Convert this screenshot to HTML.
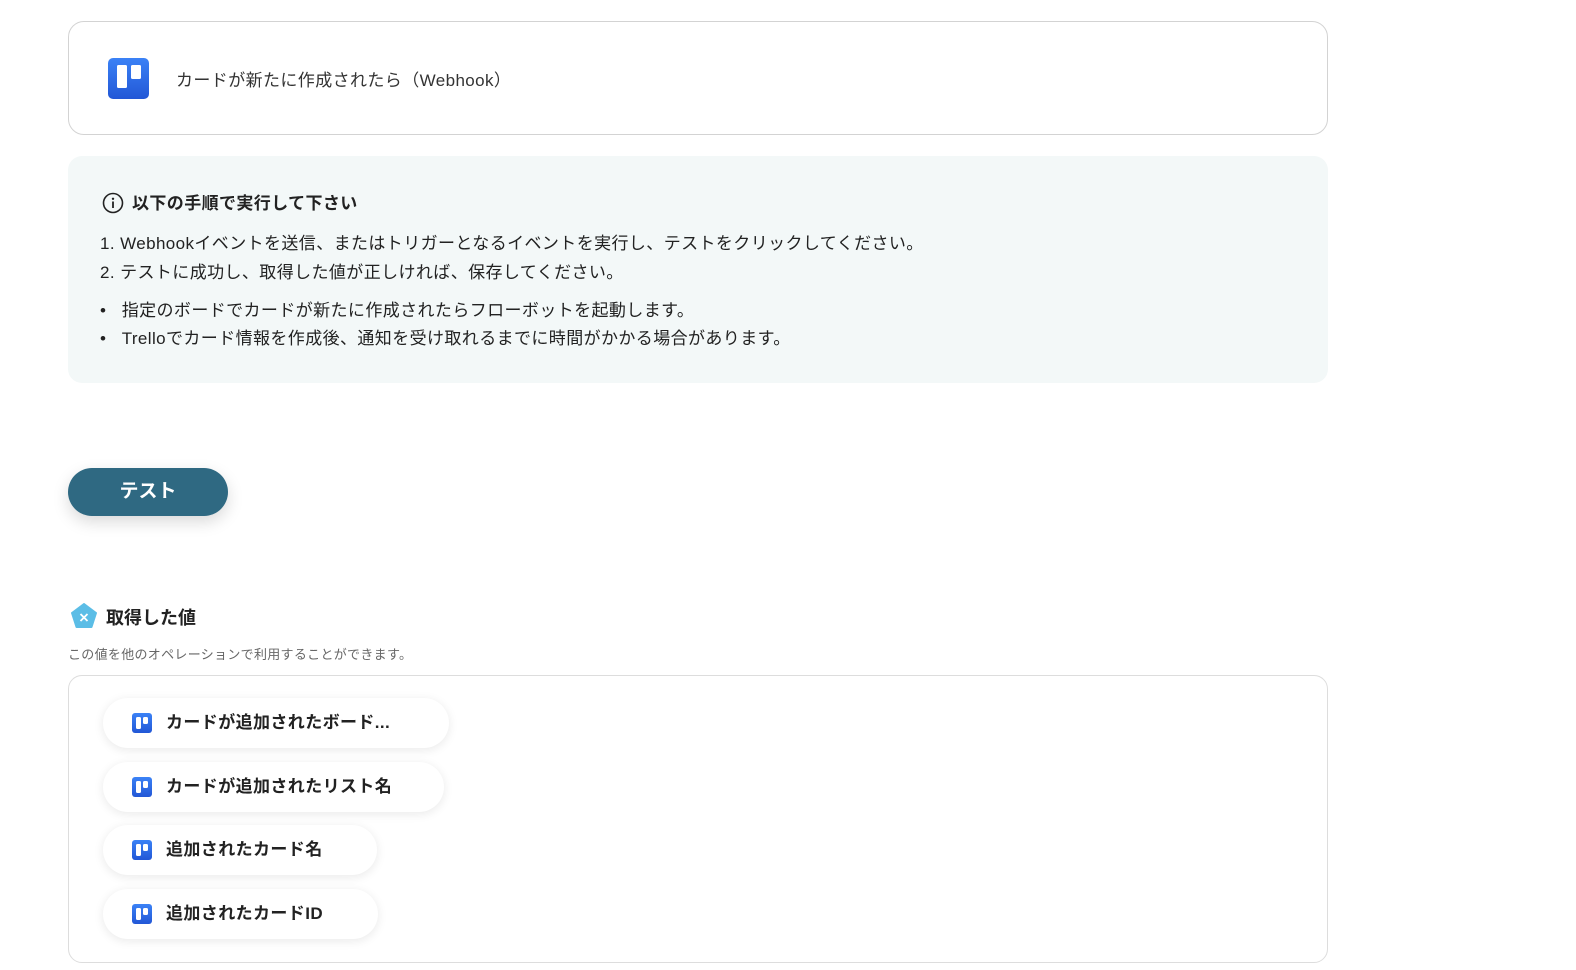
<!DOCTYPE html>
<html><head><meta charset="utf-8"><style>
html,body{margin:0;padding:0}
body{background:#fff;font-family:"Liberation Sans","Noto Sans CJK JP",sans-serif;color:#222;width:1576px;height:970px;overflow:hidden;position:relative}
.abs{position:absolute}
.card{left:68px;top:21px;width:1260px;height:114px;border:1px solid #d3d3d3;border-radius:16px;box-sizing:border-box}
.logo{background:linear-gradient(#3b82f6,#2257d6);border-radius:4px;position:absolute}
.logo:before,.logo:after{content:"";position:absolute;background:#fff;border-radius:1.5px}
.big:before{left:22%;top:17%;width:25%;height:57%}
.big:after{left:56%;top:17%;width:25%;height:35%}
.info{left:68px;top:156px;width:1260px;height:227px;background:#f3f8f8;border-radius:14px}
.info div{position:absolute;font-size:17px;white-space:nowrap;letter-spacing:0.4px}
.btn{left:68px;top:468px;width:160px;height:48px;background:#2f6982;border-radius:24px;color:#fff;font-size:19px;font-weight:bold;text-align:center;line-height:47px;box-shadow:0 6px 16px rgba(0,0,0,.15)}
.box{left:68px;top:675px;width:1260px;height:288px;border:1px solid #ddd;border-radius:14px;box-sizing:border-box}
.pill{position:absolute;left:103px;height:50px;border-radius:25px;background:#fff;box-shadow:0 2px 10px rgba(0,0,0,.09);font-size:17px;font-weight:bold;line-height:50px;padding-left:63px;box-sizing:border-box;white-space:nowrap;letter-spacing:0.4px}
.pill .logo{left:29px;top:15px;width:20px;height:20px;border-radius:3px}
.pill .logo:before{left:20%;top:18%;width:25%;height:60%}
.pill .logo:after{left:55%;top:18%;width:25%;height:36%}
</style></head><body>
<div class="abs card">
<div class="logo big" style="left:39px;top:36px;width:41px;height:41px;border-radius:5px"></div>
<div class="abs" style="left:107px;top:44px;font-size:17px;color:#333;letter-spacing:0.4px">カードが新たに作成されたら（Webhook）</div>
</div>
<div class="abs info">
<svg class="abs" style="left:34px;top:36px" width="22" height="22" viewBox="0 0 22 22"><circle cx="11" cy="11" r="9.5" fill="none" stroke="#222" stroke-width="1.6"/><circle cx="11" cy="6.8" r="1.2" fill="#222"/><path d="M11 9.5v6.5" stroke="#222" stroke-width="1.8"/></svg>
<div style="left:64px;top:33px;font-weight:bold">以下の手順で実行して下さい</div>
<div style="left:32px;top:73px">1. Webhookイベントを送信、またはトリガーとなるイベントを実行し、テストをクリックしてください。</div>
<div style="left:32px;top:102px">2. テストに成功し、取得した値が正しければ、保存してください。</div>
<div style="left:32px;top:140px">•&nbsp;&nbsp;&nbsp;指定のボードでカードが新たに作成されたらフローボットを起動します。</div>
<div style="left:32px;top:168px">•&nbsp;&nbsp;&nbsp;Trelloでカード情報を作成後、通知を受け取れるまでに時間がかかる場合があります。</div>
</div>
<div class="abs btn">テスト</div>
<svg class="abs" style="left:71px;top:603px" width="26" height="26" viewBox="0 0 26 26"><path d="M13 1L25 10 20.5 24H5.5L1 10Z" fill="#5bbde6" stroke="#5bbde6" stroke-width="2" stroke-linejoin="round"/><path d="M9.5 11l7 7M16.5 11l-7 7" stroke="#fff" stroke-width="1.8"/></svg>
<div class="abs" style="left:106px;top:604px;font-size:18px;font-weight:bold">取得した値</div>
<div class="abs" style="left:68px;top:644px;font-size:13px;color:#666;letter-spacing:0.3px">この値を他のオペレーションで利用することができます。</div>
<div class="abs box"></div>
<div class="pill" style="top:698px;width:346px"><span class="logo"></span>カードが追加されたボード...</div>
<div class="pill" style="top:762px;width:341px"><span class="logo"></span>カードが追加されたリスト名</div>
<div class="pill" style="top:825px;width:274px"><span class="logo"></span>追加されたカード名</div>
<div class="pill" style="top:889px;width:275px"><span class="logo"></span>追加されたカードID</div>
</body></html>
